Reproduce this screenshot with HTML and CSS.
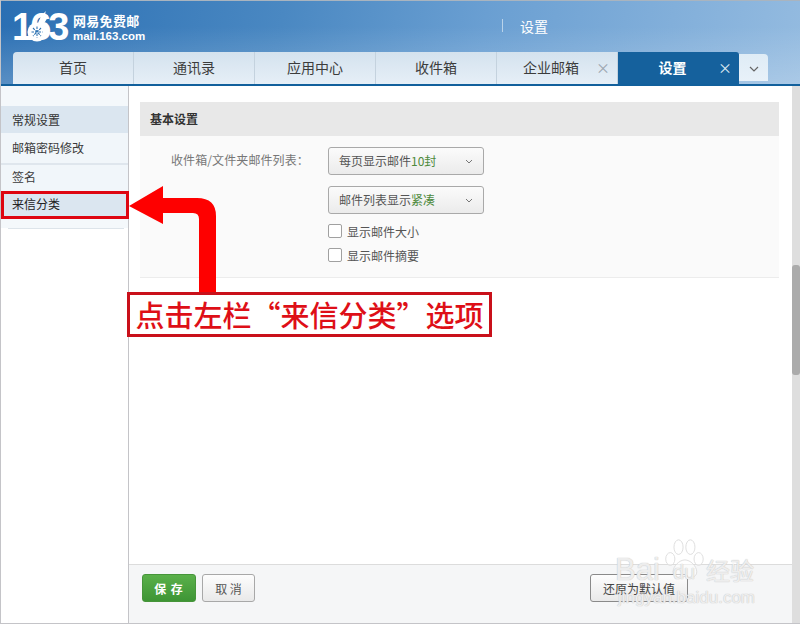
FILE: index.html
```html
<!DOCTYPE html>
<html lang="zh-CN">
<head>
<meta charset="utf-8">
<title>设置</title>
<link rel="stylesheet" href="styles.css">
</head>
<body>
<div class="app">
  <header class="header">
    <div class="brand-row">
      <div class="logo">
        <span class="logo-num">163</span>
        <svg class="logo-rabbit" width="26" height="32" viewBox="0 0 26 32">
          <path d="M13 16C15 9 18 4 22 1c-1 3-2 5-3 7 2-2 3-2 5-3-1 4-3 8-6 10z" fill="#fff"/>
          <circle cx="13" cy="22" r="9.500" fill="#fff"/>
          <path d="M13 16.500v11M7.500 22h11M9 18l8 8M17 18l-8 8" stroke="#2f73b2" stroke-width="1.100" stroke-dasharray="2.500 1"/>
        </svg>
        <div class="logo-text">
          <span class="logo-cn">网易免费邮</span>
          <span class="logo-en">mail.163.com</span>
        </div>
      </div>
      <div class="page-title">设置</div>
    </div>
    <nav class="tabs">
      <div class="tab tab-first">首页</div>
      <div class="tab">通讯录</div>
      <div class="tab">应用中心</div>
      <div class="tab">收件箱</div>
      <div class="tab tab-closable">企业邮箱<span class="tab-close">×</span></div>
      <div class="tab tab-closable tab-active">设置<span class="tab-close">×</span></div>
      <div class="tab-more">
        <svg width="10" height="6" viewBox="0 0 10 6"><path d="M1 1l4 4 4-4" fill="none" stroke="#666" stroke-width="1.200"/></svg>
      </div>
    </nav>
  </header>
  <div class="body">
    <aside class="sidebar">
      <div class="side-fill"></div>
      <div class="side-group">常规设置</div>
      <div class="side-item side-item-a">邮箱密码修改</div>
      <div class="side-sep"></div>
      <div class="side-item side-item-b">签名</div>
      <div class="side-item side-current">来信分类</div>
      <div class="side-end"></div>
      <div class="side-rule"></div>
    </aside>
    <main class="main">
      <div class="content">
        <section class="panel">
          <h2 class="panel-title">基本设置</h2>
          <div class="panel-body">
            <div class="form-label">收件箱/文件夹邮件列表<span class="colon">：</span></div>
            <div class="form-fields">
              <div class="select">每页显示邮件<em class="green">10封</em><svg class="caret" width="8" height="5" viewBox="0 0 8 5"><path d="M1 1l3 3 3-3" fill="none" stroke="#777"/></svg></div>
              <div class="select">邮件列表显示<em class="green">紧凑</em><svg class="caret" width="8" height="5" viewBox="0 0 8 5"><path d="M1 1l3 3 3-3" fill="none" stroke="#777"/></svg></div>
              <label class="check"><span class="box"></span>显示邮件大小</label>
              <label class="check"><span class="box"></span>显示邮件摘要</label>
            </div>
          </div>
        </section>
      </div>
      <footer class="footer">
        <button class="btn btn-save">保 存</button>
        <button class="btn">取 消</button>
        <button class="btn btn-reset">还原为默认值</button>
      </footer>
    </main>
    <div class="scrollbar"><div class="scroll-thumb"></div></div>
  </div>

  <div class="mark-box"></div>
  <svg class="arrow" width="90" height="115" viewBox="0 0 90 115">
    <path d="M0 20L34 0V12H68Q87 12 87 30V115H70V33Q70 27 64 27H34V38Z" fill="#fe0000"/>
  </svg>
  <div class="callout">点击左栏“来信分类”选项</div>

  <div class="watermark">
    <svg class="paw" width="44" height="42" viewBox="0 0 44 46">
      <g fill="rgba(255,255,255,.5)" stroke="#dcdcdc" stroke-width="1">
        <ellipse cx="7" cy="23" rx="5" ry="7"/>
        <ellipse cx="16" cy="10" rx="5" ry="8"/>
        <ellipse cx="29" cy="10" rx="5" ry="8"/>
        <ellipse cx="38" cy="23" rx="5" ry="7"/>
        <path d="M23 24c6 0 13 7 13 13 0 7-8 7-13 5-5 2-13 2-13-5 0-6 7-13 13-13z"/>
      </g>
    </svg>
    <span class="wm-bai">Bai</span>
    <span class="wm-du">du</span>
    <span class="wm-jy">经验</span>
    <span class="wm-url">jingyan.baidu.com</span>
  </div>
</div>
</body>
</html>
```
FILE: styles.css
```css
* { box-sizing: border-box; }
html, body { margin: 0; padding: 0; }
body {
  font-family: "Noto Sans CJK SC", "Liberation Sans", sans-serif;
  font-size: 12px;
  color: #444;
  background: #fff;
}
.app {
  position: relative;
  width: 800px;
  height: 624px;
  overflow: hidden;
  display: flex;
  flex-direction: column;
  border-left: 1px solid #c4c4c8;
  border-bottom: 1px solid #c4c4c8;
}
.header {
  height: 86px;
  margin-left: -1px;
  flex: none;
  border-top: 1px solid #a9b4bf;
  display: flex;
  flex-direction: column;
  background:
    linear-gradient(180deg, rgba(255,255,255,0) 30%, rgba(255,255,255,.22) 100%),
    linear-gradient(100deg, #2a6fb3 0, #4a88c2 35%, #6a9fd2 60%, #94bbe0 100%);
}
.brand-row {
  height: 51px;
  flex: none;
  display: flex;
  align-items: flex-start;
}
.logo {
  position: relative;
  width: 507px;
  height: 51px;
  padding: 9px 0 0 12px;
  display: flex;
  color: #fff;
}
.logo-num {
  font-family: "Liberation Sans", sans-serif;
  font-weight: 700;
  font-size: 38px;
  line-height: 34px;
  letter-spacing: -3px;
  width: 61px;
}
.logo-rabbit {
  position: absolute;
  left: 24px;
  top: 9px;
}
.logo-text {
  display: flex;
  flex-direction: column;
  padding-top: 2px;
}
.logo-cn {
  font-size: 13px;
  font-weight: 700;
  line-height: 17px;
  letter-spacing: .300px;
}
.logo-en {
  font-family: "Liberation Sans", sans-serif;
  font-size: 11.500px;
  font-weight: 700;
  line-height: 15px;
}
.page-title {
  margin: 15px 0 0 0;
  padding-left: 18px;
  height: 20px;
  font-size: 14px;
  line-height: 20px;
  color: #fff;
  position: relative;
  left: -5px;
  background: linear-gradient(#b9d3ea, #b9d3ea) no-repeat 0 3px / 1px 13px;
}
.tabs {
  height: 34px;
  flex: none;
  padding-left: 13px;
  display: flex;
  align-items: flex-start;
  border-bottom: 2px solid #12609c;
}
.tab {
  position: relative;
  width: 121px;
  height: 32px;
  font-size: 14px;
  line-height: 31px;
  text-align: center;
  color: #3c3c3c;
  background: linear-gradient(#d4e2ee, #e6eff7);
  border-right: 1px solid #c4d2de;
}
.tab-closable { padding-right: 12px; }
.tab-first { border-top-left-radius: 4px; }
.tab-active {
  color: #fff;
  font-weight: 700;
  background: #15619d;
  border-right: 0;
  border-top-right-radius: 3px;
}
.tab-close {
  position: absolute;
  right: 7px;
  top: 0;
  width: 14px;
  font-size: 14px;
  font-weight: 400;
  line-height: 31px;
  color: #9aa5ae;
}
.tab-active .tab-close {
  right: 7px;
  color: #dfeaf3;
}
.tab-more {
  width: 29px;
  height: 27px;
  margin-top: 2px;
  border-top-right-radius: 4px;
  background: linear-gradient(#dfecf6, #e8f1f9);
  display: flex;
  align-items: center;
  justify-content: center;
  padding-top: 3px;
}
.body {
  flex: 1;
  min-height: 0;
  display: flex;
}
.sidebar {
  width: 128px;
  flex: none;
  border-right: 1px solid #c4c4c8;
  background: #fff;
}
.side-fill {
  height: 20px;
  background: #f4f8fb;
}
.side-group,
.side-item {
  padding-left: 11px;
  color: #3a3a3a;
}
.side-group {
  height: 27px;
  line-height: 27px;
  color: #333;
  background: #dbe6f0;
}
.side-item-a {
  height: 30px;
  line-height: 30px;
  background: #f1f6fa;
}
.side-sep {
  height: 2px;
  background: #dfe6ed;
}
.side-item-b {
  height: 26px;
  line-height: 24px;
  background: #f1f6fa;
}
.side-current {
  height: 27px;
  line-height: 26px;
  color: #222;
  background: #dbe6f0;
}
.side-end {
  height: 10px;
  background: #f4f8fb;
}
.side-rule {
  height: 1px;
  margin: 0 4px 0 7px;
  background: #dde4ea;
}
.main {
  flex: 1;
  min-width: 0;
  display: flex;
  flex-direction: column;
}
.content {
  flex: 1;
  padding: 16px 13px 0 11px;
}
.panel {
  background: #fafafa;
  border-bottom: 1px solid #ececec;
  height: 176px;
}
.panel-title {
  margin: 0;
  height: 34px;
  padding-left: 10px;
  font-size: 12px;
  font-weight: 700;
  line-height: 34px;
  color: #333;
  background: #e8e8e8;
}
.panel-body {
  display: flex;
  padding-top: 11px;
}
.form-label {
  width: 188px;
  padding-left: 31px;
  line-height: 26px;
  color: #777;
  letter-spacing: .100px;
}
.colon {
  font-family: "Noto Sans CJK TC", "Liberation Sans", sans-serif;
}
.form-fields {
  display: flex;
  flex-direction: column;
  align-items: flex-start;
}
.select {
  position: relative;
  width: 156px;
  height: 28px;
  margin-bottom: 11px;
  padding-left: 10px;
  line-height: 26px;
  color: #555;
  border: 1px solid #a9a9a9;
  border-radius: 3px;
  background: linear-gradient(#fbfbfb, #ebebeb);
}
.select:nth-child(2) { margin-bottom: 5px; }
.green {
  font-style: normal;
  color: #4d8a3c;
}
.caret {
  position: absolute;
  right: 10px;
  top: 11px;
}
.check {
  display: flex;
  align-items: center;
  height: 24px;
  color: #555;
}
.box {
  width: 14px;
  height: 14px;
  margin-right: 5px;
  border: 1px solid #a0a0a0;
  border-radius: 2px;
  background: #fff;
}
.footer {
  height: 59px;
  flex: none;
  padding: 9px 0 0 13px;
  display: flex;
  background: #f5f6f7;
  border-top: 1px solid #dcdcdc;
}
.btn {
  width: 53px;
  height: 28px;
  margin-right: 7px;
  padding: 0;
  font: inherit;
  color: #555;
  border: 1px solid #a8a8a8;
  border-radius: 3px;
  background: linear-gradient(#fdfdfd, #e9e9e9);
}
.btn-save {
  width: 54px;
  margin-right: 6px;
  font-weight: 700;
  letter-spacing: 1px;
  color: #fff;
  border-color: #46953a;
  background: linear-gradient(#5ab04a, #3e9535);
}
.btn-reset {
  width: 98px;
  margin-left: 328px;
  color: #444;
  border-color: #8a8a8a;
}
.scrollbar {
  position: relative;
  width: 8px;
  flex: none;
  background: #dedede;
}
.scroll-thumb {
  position: absolute;
  left: 0;
  right: 0;
  top: 179px;
  height: 110px;
  border-radius: 3px;
  background: #ababab;
}
.mark-box {
  position: absolute;
  left: 0;
  top: 191px;
  width: 128px;
  height: 28px;
  border: 3px solid #de0611;
}
.arrow {
  position: absolute;
  left: 128px;
  top: 186px;
}
.callout {
  position: absolute;
  left: 126px;
  top: 292px;
  width: 365px;
  height: 45px;
  border: 3px solid #c9101a;
  background: #fff;
  color: #de0f17;
  font-size: 29px;
  font-weight: 500;
  line-height: 39px;
  text-align: center;
  white-space: nowrap;
}
.watermark {
  position: absolute;
  left: 612px;
  top: 535px;
  width: 150px;
  height: 72px;
  color: rgba(255,255,255,.7);
  text-shadow: 0 0 1px #c8c8c8, 0 0 1px #c8c8c8;
}
.paw {
  position: absolute;
  left: 49px;
  top: 3px;
}
.wm-bai,
.wm-du {
  position: absolute;
  font-family: "Liberation Sans", sans-serif;
}
.wm-bai {
  left: 2px;
  top: 18px;
  font-size: 31px;
  line-height: 34px;
}
.wm-du {
  left: 60px;
  top: 24px;
  font-size: 20px;
  line-height: 26px;
}
.wm-jy {
  position: absolute;
  left: 93px;
  top: 20px;
  font-size: 24px;
  line-height: 30px;
}
.wm-url {
  position: absolute;
  left: 5px;
  top: 54px;
  font-family: "Liberation Sans", sans-serif;
  font-size: 17px;
  line-height: 18px;
  white-space: nowrap;
}
```
